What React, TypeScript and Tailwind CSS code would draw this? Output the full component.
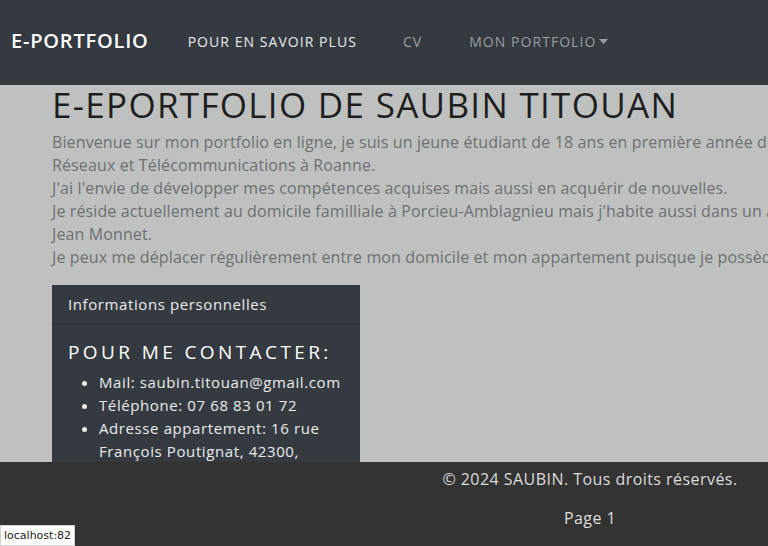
const font = { fontFamily: '"Open Sans", "Noto Sans", sans-serif' }

function Navbar() {
  return (
    <nav className="flex h-[85px] items-center bg-[#343a40] px-[11px] pb-[3px]">
      <a className="mr-[39px] text-[20px] font-semibold tracking-[0.8px] text-white">E-PORTFOLIO</a>
      <ul className="flex items-center text-[14px] tracking-[1.05px]">
        <li className="text-white/90">POUR EN SAVOIR PLUS</li>
        <li className="ml-[46px] text-[#9a9da2]">CV</li>
        <li className="ml-[47px] flex items-center gap-[3px] text-[#9a9da2]">
          MON PORTFOLIO
          <svg width="9" height="5" viewBox="0 0 9 5"><path d="M0 0h9L4.5 5z" fill="currentColor" /></svg>
        </li>
      </ul>
    </nav>
  )
}

export default function App() {
  return (
    <div className="relative h-[546px] w-screen overflow-hidden bg-[#bfc1c0]" style={font}>
      <div className="w-[1180px]">
        <Navbar />
        <main className="px-[52px]">
          <h1 className="mt-[1px] text-[35px] leading-[38px] tracking-[1.3px] text-[#1e1e1e]">E-EPORTFOLIO DE SAUBIN TITOUAN</h1>
          <div className="mt-[7px] whitespace-nowrap text-[16px] leading-[23px] tracking-[0.12px] text-[#6e7071]">
            <p>
              Bienvenue sur mon portfolio en ligne, je suis un jeune étudiant de 18 ans en première année de BUT
              <br />
              Réseaux et Télécommunications à Roanne.
            </p>
            <p>J'ai l'envie de développer mes compétences acquises mais aussi en acquérir de nouvelles.</p>
            <p>
              Je réside actuellement au domicile familliale à Porcieu-Amblagnieu mais j'habite aussi dans un appartement à
              <br />
              Jean Monnet.
            </p>
            <p>Je peux me déplacer régulièrement entre mon domicile et mon appartement puisque je possède le permis B.</p>
          </div>

          <div className="mt-[16px] w-[308px] bg-[#343a40] text-white">
            <div className="border-b border-[#2c3035] px-4 py-[8px] text-[15px] leading-[22px] tracking-[0.6px] text-white/90">Informations personnelles</div>
            <div className="px-4 pt-[14px]">
              <h2 className="text-[19px] leading-[28px] tracking-[3.4px]">POUR ME CONTACTER:</h2>
              <ul className="mt-[5px] list-disc pl-[31px] text-[15px] leading-[23px] tracking-[0.6px] text-white/90">
                <li>Mail: saubin.titouan@gmail.com</li>
                <li>Téléphone: 07 68 83 01 72</li>
                <li>Adresse appartement: 16 rue François Poutignat, 42300, Roanne</li>
                <li>Adresse domicile: Porcieu-Amblagnieu</li>
              </ul>
            </div>
          </div>
        </main>
      </div>

      <footer className="absolute bottom-0 left-0 h-[84px] w-[1180px] bg-[#333333] pt-[6px] text-center text-[16px] leading-[23px] tracking-[0.45px] text-[#dcdcdc]">
        <p>© 2024 SAUBIN. Tous droits réservés.</p>
        <p className="mt-[16px]">Page 1</p>
      </footer>

      <div className="absolute bottom-0 left-0 border border-[#d0d0d0] bg-white px-[3px] text-[11px] leading-[19px] text-[#222]" style={{ fontFamily: '"DejaVu Sans", sans-serif' }}>
        localhost:82
      </div>
    </div>
  )
}
